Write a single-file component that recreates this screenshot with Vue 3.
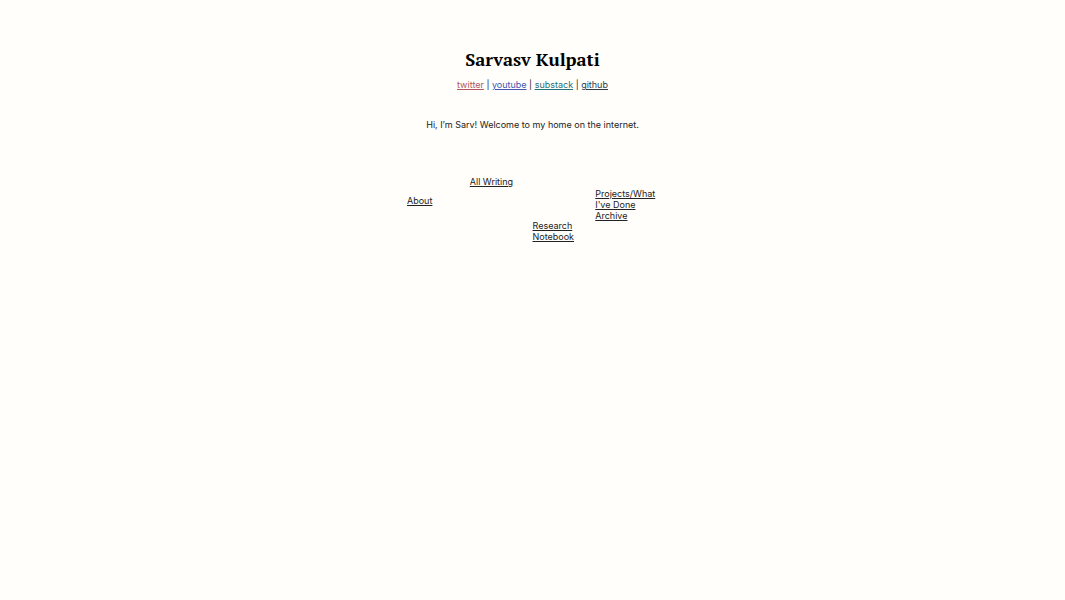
<template>
    <main class="home">
        <h1 class="title">Sarvasv Kulpati</h1>
        <nav class="socials">
            <template v-for="(social, index) in socials" :key="social.name">
                <span v-if="index > 0" class="divider"> | </span>
                <a :href="social.url" :class="social.name">{{ social.name }}</a>
            </template>
        </nav>
        <p class="intro">Hi, I’m Sarv! Welcome to my home on the internet.</p>
        <nav class="pages">
            <div v-for="column in columns" :key="column.name" class="column" :class="column.name">
                <a v-for="page in column.pages" :key="page" href="#">{{ page }}</a>
            </div>
        </nav>
    </main>
</template>

<script setup>
const socials = [
    { name: 'twitter', url: '#twitter' },
    { name: 'youtube', url: '#youtube' },
    { name: 'substack', url: '#substack' },
    { name: 'github', url: '#github' }
]

const columns = [
    { name: 'about', pages: ['About'] },
    { name: 'writing', pages: ['All Writing'] },
    { name: 'research', pages: ['Research Notebook'] },
    { name: 'projects', pages: ["Projects/What I've Done", 'Archive'] }
]
</script>

<style>
body {
    margin: 0;
    background-color: #fffefa;
}
</style>

<style scoped>
.home {
    display: flex;
    flex-direction: column;
    align-items: center;
    padding: 46px 16px 16px;
    color: #222;
    font-family: Inter, "Liberation Sans", sans-serif;
    font-size: 9px;
    line-height: 11px;
}

.title {
    margin: 0;
    color: #000;
    font-family: "PT Serif", "Liberation Serif", serif;
    font-size: 18px;
    font-weight: 700;
    line-height: 26px;
}

.socials {
    margin-top: 7px;
}

.divider {
    white-space: pre;
}

a {
    color: #222;
}

.twitter {
    color: #b05560;
}

.youtube {
    color: #4454b0;
}

.substack {
    color: #24707a;
}

.github {
    color: #2c3a4a;
}

.intro {
    margin: 29px 0 46px;
}

.pages {
    display: grid;
    grid-template-columns: repeat(4, 1fr);
    width: 100%;
    max-width: 251px;
}

.column {
    display: flex;
    flex-direction: column;
    align-items: flex-start;
}

.about {
    padding-top: 19px;
}

.research {
    padding-top: 44px;
}

.projects {
    padding-top: 12px;
}
</style>
